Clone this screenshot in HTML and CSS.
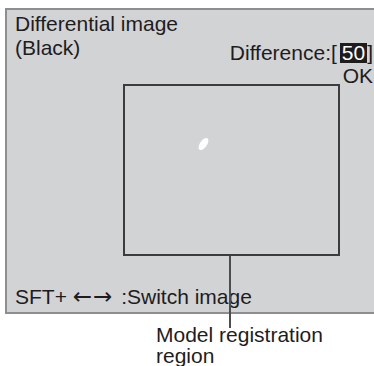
FILE: index.html
```html
<!DOCTYPE html>
<html>
<head>
<meta charset="utf-8">
<link rel="stylesheet" href="styles.css">
</head>
<body>
<div class="page">
  <div class="screen">
    <div class="title">Differential image<br>(Black)</div>
    <div class="readout">
      <div>Difference:[<span class="value">50</span>]</div>
      <div>OK</div>
    </div>
    <div class="region"><span class="blob"></span></div>
    <div class="footer">SFT+ <span class="arrows">←→</span> :Switch image</div>
  </div>
  <div class="caption">Model registration<br>region</div>
  <span class="leader"></span>
</div>
</body>
</html>
```
FILE: styles.css
```css
html, body {
  margin: 0;
  padding: 0;
  background: #ffffff;
}
body {
  font-family: "Liberation Sans", Arial, sans-serif;
  font-size: 21px;
  color: #1f1c1d;
}
.page {
  position: relative;
  width: 374px;
  height: 366px;
  overflow: hidden;
}
.screen {
  display: grid;
  margin: 8px 0 0 5px;
  width: 369px;
  height: 302px;
  box-sizing: content-box;
  background: #d2d3d5;
  border: 2px solid #8d8e90;
  border-right: none;
}
.screen > * {
  grid-area: 1 / 1;
}
.title {
  align-self: start;
  justify-self: start;
  margin: 2px 0 0 8px;
  line-height: 24px;
}
.readout {
  align-self: start;
  justify-self: end;
  margin: 31px 3px 0 0;
  line-height: 23px;
  text-align: right;
}
.value {
  display: inline-block;
  background: #1f1c1d;
  color: #ffffff;
  line-height: 20px;
  padding: 0 2px;
  margin-left: 3px;
}
.region {
  position: relative;
  align-self: start;
  justify-self: start;
  margin: 74px 0 0 116px;
  width: 213px;
  height: 168px;
  border: 2px solid #3c3c3e;
}
.blob {
  position: absolute;
  left: 75px;
  top: 51px;
  width: 7px;
  height: 14px;
  border-radius: 50%;
  background: #ffffff;
  transform: rotate(35deg);
}
.footer {
  align-self: end;
  justify-self: start;
  margin: 0 0 3px 8px;
  line-height: 24px;
}
.arrows {
  font-family: "DejaVu Sans", sans-serif;
  font-size: 23px;
  line-height: 20px;
  letter-spacing: 1px;
  margin-right: 2px;
}
.caption {
  margin: 10px 0 0 156px;
  line-height: 21px;
}
.leader {
  position: absolute;
  left: 229px;
  top: 256px;
  width: 2px;
  height: 72px;
  background: #4d4d4f;
}
```
